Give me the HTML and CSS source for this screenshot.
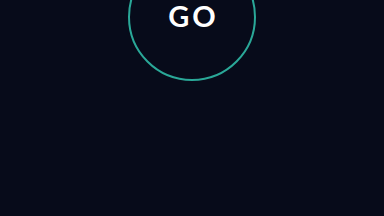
FILE: index.html
```html
<!DOCTYPE html>
<html>
<head>
<meta charset="utf-8">
<link rel="stylesheet" href="styles.css">
</head>
<body>
<div class="stage">
  <button class="go">GO</button>
</div>
</body>
</html>
```

FILE: styles.css
```css
html, body {
  margin: 0;
  padding: 0;
  width: 384px;
  height: 216px;
  overflow: hidden;
  background: #070b1a;
}
.stage {
  display: flex;
  justify-content: center;
  padding-top: 1px;
  margin-top: -48px;
}
.go {
  box-sizing: border-box;
  width: 128px;
  height: 128px;
  border-radius: 50%;
  border: 2px solid #2aa898;
  background: transparent;
  color: #ffffff;
  font-family: Lato, "Open Sans", sans-serif;
  font-weight: 700;
  font-size: 29px;
  line-height: 1;
  letter-spacing: 3px;
  padding: 0 0 4px 3px;
  display: flex;
  align-items: center;
  justify-content: center;
}
```
